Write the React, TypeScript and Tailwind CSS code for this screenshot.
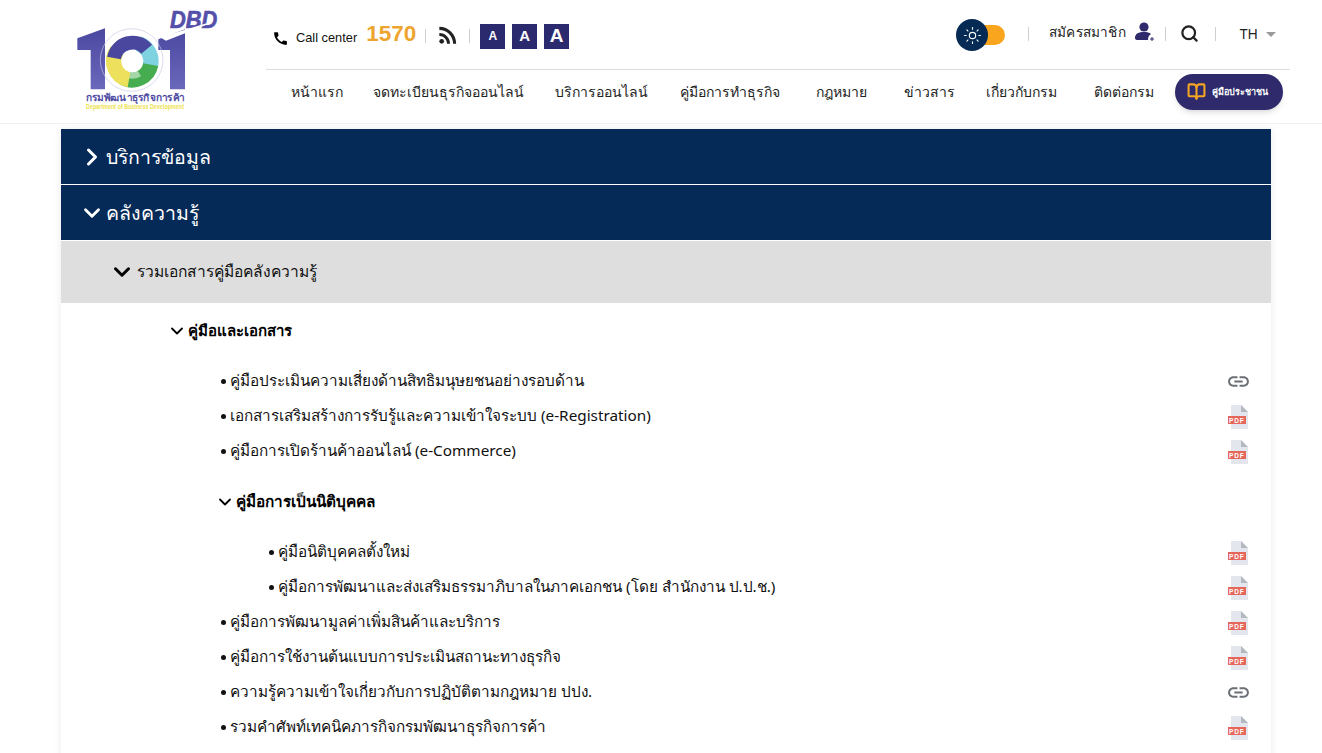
import { ChevronDown, ChevronRight, Search, Sun, BookOpen } from 'lucide-react';
import { MdCall, MdLink, MdRssFeed } from 'react-icons/md';

const font = { fontFamily: '"Noto Sans", "Open Sans", "DejaVu Sans", sans-serif' };
const latin = { fontFamily: '"Liberation Sans", sans-serif' };

const navItems = [
  { label: 'หน้าแรก', width: 'w-[82px]' },
  { label: 'จดทะเบียนธุรกิจออนไลน์', width: 'w-[182px]' },
  { label: 'บริการออนไลน์', width: 'w-[125px]' },
  { label: 'คู่มือการทำธุรกิจ', width: 'w-[136px]' },
  { label: 'กฎหมาย', width: 'w-[88px]' },
  { label: 'ข่าวสาร', width: 'w-[82px]' },
  { label: 'เกี่ยวกับกรม', width: 'w-[108px]' },
  { label: 'ติดต่อกรม', width: 'w-[81px]' },
];

function Logo() {
  return (
    <svg viewBox="45 24 435 336" className="w-[145px] h-[112px] shrink-0 overflow-visible">
      <defs>
        <linearGradient id="one" x1="0" y1="0" x2="0" y2="1">
          <stop offset="0" stopColor="#4b48a0" />
          <stop offset="1" stopColor="#6a68bb" />
        </linearGradient>
      </defs>
      <path d="M52 115 L135 85 V268 H92 V150 H52 Z" fill="url(#one)" />
      <path d="M295 118 L375 88 V268 H330 V150 H295 Z" fill="url(#one)" />
      <circle cx="215" cy="180" r="94" fill="none" stroke="#c7c8e6" strokeWidth="2" />
      {/* swirl bands */}
      <g fill="none">
        <path d="M236 131 A56 56 0 0 1 271 198" stroke="#7fd2e0" strokeWidth="46" />
        <path d="M272 194 A56 56 0 0 1 189 232" stroke="#45ad4f" strokeWidth="46" />
        <path d="M238 220 A42 42 0 0 1 196 220" stroke="#a5d6a8" strokeWidth="20" />
        <path d="M207 239 A56 56 0 0 1 171 152" stroke="#ece05c" strokeWidth="46" />
        <path d="M162 174 A56 56 0 0 1 260 148" stroke="#4a479e" strokeWidth="42" />
      </g>
      <circle cx="217" cy="186" r="31" fill="#fff" />
      <text x="330" y="84" fontSize="72" fontWeight="700" fontStyle="italic" fill="#5450aa" stroke="#5450aa" strokeWidth="2" style={latin} textLength="142" lengthAdjust="spacingAndGlyphs">DBD</text>
      <path d="M300 112 L440 70 L440 74 L318 122 Z" fill="#fff" />
      <text x="78" y="303" fontSize="29" fontWeight="700" fill="#4f4ca3" style={font} textLength="294" lengthAdjust="spacingAndGlyphs">กรมพัฒนาธุรกิจการค้า</text>
      <text x="78" y="326" fontSize="19" fontWeight="700" fill="#ede24e" style={latin} textLength="294" lengthAdjust="spacingAndGlyphs">Department of Business Development</text>
    </svg>
  );
}

function PdfIcon() {
  return (
    <svg viewBox="0 0 20 24" className="w-[20px] h-[24px]">
      <path d="M3 0 H13 L20 7 V24 H3 Z" fill="#e3e6ec" />
      <path d="M13 0 L20 7 H13 Z" fill="#b4b8bf" />
      <rect x="0" y="11" width="18" height="8" fill="#e5675c" />
      <text x="1" y="17.5" fontSize="6.5" fontWeight="700" letterSpacing="0.9" fill="#fff" style={latin}>PDF</text>
    </svg>
  );
}

function UserPlusIcon() {
  return (
    <svg viewBox="0 0 20 20" className="w-[20px] h-[20px]">
      <circle cx="9" cy="5" r="4.6" fill="#2e2a6b" />
      <path d="M0 16 C0 11.5 4 10 9 10 C12 10 14.5 10.6 16 12 C14 13 13 15 13 18 H3 C1 18 0 17.5 0 16 Z" fill="#2e2a6b" />
      <path d="M17 15 V19 M15 17 H19" stroke="#2e2a6b" strokeWidth="1" />
    </svg>
  );
}

function Separator({ className }: { className: string }) {
  return <span className={`w-px h-[14px] bg-[#cfcfcf] ${className}`} />;
}

function Row({ text, icon, indent = 'pl-[160px]' }: { text: string; icon: 'pdf' | 'link'; indent?: string }) {
  return (
    <div className={`flex items-center justify-between h-[35px] pr-[23px] ${indent}`}>
      <span className="flex items-center text-[15.3px] text-[#111]">
        <span className="w-[5px] h-[5px] rounded-full bg-[#111] mr-[4px] mt-[2px]" />
        {text}
      </span>
      <span className="w-[20px] flex justify-center pt-[2px]">
        {icon === 'pdf' ? <PdfIcon /> : <MdLink className="w-[25px] h-[25px] shrink-0 text-[#6b7076]" />}
      </span>
    </div>
  );
}

export default function App() {
  return (
    <div className="bg-white h-[753px] overflow-hidden" style={font}>
      <header className="h-[124px] border-b border-[#f1f1f1] flex pl-[75px] pr-[32px]">
        <div className="pt-[8px]"><Logo /></div>
        <div className="ml-[46px] flex-1 flex flex-col">
          <div className="h-[70px] border-b border-[#dcdcdc] flex items-center pl-[6px] pb-[1px]">
            <MdCall className="mt-[8px] w-[17px] h-[17px] text-black" />
            <span className="mt-[8px] ml-[7px] text-[12.8px] text-[#111]" style={latin}>Call center</span>
            <span className="ml-[9px] text-[22.5px] font-bold text-[#eda52f]" style={latin}>1570</span>
            <Separator className="mt-[4px] ml-[9px]" />
            <MdRssFeed className="mt-[2px] ml-[9px] w-[26px] h-[26px] text-[#222]" />
            <Separator className="mt-[4px] ml-[8px]" />
            <div className="mt-[4px] ml-[10px] flex gap-[7px]" style={latin}>
              <span className="w-[25px] h-[25px] bg-[#2b2a6e] text-white font-bold text-[12px] flex items-center justify-center">A</span>
              <span className="w-[25px] h-[25px] bg-[#2b2a6e] text-white font-bold text-[15px] flex items-center justify-center">A</span>
              <span className="w-[25px] h-[25px] bg-[#2b2a6e] text-white font-bold text-[19px] flex items-center justify-center">A</span>
            </div>
            <div className="ml-auto mr-[14px] flex items-center">
              <div className="relative mt-[2px] w-[49px] h-[32px] flex items-center">
                <span className="absolute right-0 w-[30px] h-[20px] rounded-full bg-[#f9a61e]" />
                <span className="absolute left-0 w-[32px] h-[32px] rounded-full bg-[#052a54] flex items-center justify-center">
                  <Sun className="w-[19px] h-[19px] text-white" strokeWidth={1.4} />
                </span>
              </div>
              <Separator className="ml-[23px]" />
              <span className="ml-[20px] mb-[4px] text-[13.6px] tracking-[0.2px] text-[#222]">สมัครสมาชิก</span>
              <span className="ml-[9px] mb-[4px] flex"><UserPlusIcon /></span>
              <Separator className="ml-[10px]" />
              <Search className="ml-[14px] mb-[2px] w-[19px] h-[19px] text-[#222]" strokeWidth={2.8} />
              <Separator className="ml-[16px]" />
              <span className="ml-[24px] mb-[2px] text-[14px] text-[#222]">TH</span>
              <span className="ml-[8px] w-0 h-0 border-x-[5px] border-x-transparent border-t-[5px] border-t-[#999]" />
            </div>
          </div>
          <nav className="flex-1 flex items-center justify-end pb-[10px]">
            <div className="flex items-center text-[14px] text-[#222]">
              {navItems.map((n) => <span key={n.label} className={n.width}>{n.label}</span>)}
            </div>
            <div className="mr-[7px] w-[108px] h-[36px] rounded-full bg-[#2e2a6b] shadow-md flex items-center pl-[12px] gap-[6px]">
              <BookOpen className="w-[19px] h-[19px] text-[#f5a623]" strokeWidth={2.6} />
              <span className="text-[9px] font-bold text-white">คู่มือประชาชน</span>
            </div>
          </nav>
        </div>
      </header>

      <main className="ml-[61px] w-[1210px] mt-[5px] shadow-[0_0_8px_rgba(0,0,0,0.08)]">
        <div className="h-[55px] bg-[#052a57] flex items-center pl-[17px] text-white text-[19.5px] font-medium">
          <ChevronRight className="w-[28px] h-[28px]" strokeWidth={2.6} />
          <span>บริการข้อมูล</span>
        </div>
        <div className="h-[55px] mt-px bg-[#052a57] flex items-center pl-[18px] text-white text-[19.5px] font-medium">
          <ChevronDown className="w-[26px] h-[26px]" strokeWidth={2.6} />
          <span className="ml-px">คลังความรู้</span>
        </div>
        <div className="h-[62px] mt-px bg-[#dedede] flex items-center pl-[48px] text-[15.6px] text-[#111]">
          <ChevronDown className="w-[26px] h-[26px] text-black" strokeWidth={2.8} />
          <span className="ml-[2px]">รวมเอกสารคู่มือคลังความรู้</span>
        </div>
        <section className="bg-white pt-[10px] h-[500px]">
          <div className="h-[35px] flex items-center pl-[106px] text-[15px] font-bold text-black">
            <ChevronDown className="w-[20px] h-[20px]" strokeWidth={2.2} />
            <span className="ml-px">คู่มือและเอกสาร</span>
          </div>
          <div className="mt-[15px]">
            <Row icon="link" text="คู่มือประเมินความเสี่ยงด้านสิทธิมนุษยชนอย่างรอบด้าน" />
            <Row icon="pdf" text="เอกสารเสริมสร้างการรับรู้และความเข้าใจระบบ (e-Registration)" />
            <Row icon="pdf" text="คู่มือการเปิดร้านค้าออนไลน์ (e-Commerce)" />
          </div>
          <div className="mt-[16px] h-[35px] flex items-center pl-[154px] text-[15.3px] font-bold text-black">
            <ChevronDown className="w-[20px] h-[20px]" strokeWidth={2.2} />
            <span className="ml-px">คู่มือการเป็นนิติบุคคล</span>
          </div>
          <div className="mt-[15px]">
            <Row indent="pl-[208px]" icon="pdf" text="คู่มือนิติบุคคลตั้งใหม่" />
            <Row indent="pl-[208px]" icon="pdf" text="คู่มือการพัฒนาและส่งเสริมธรรมาภิบาลในภาคเอกชน (โดย สำนักงาน ป.ป.ช.)" />
            <Row icon="pdf" text="คู่มือการพัฒนามูลค่าเพิ่มสินค้าและบริการ" />
            <Row icon="pdf" text="คู่มือการใช้งานต้นแบบการประเมินสถานะทางธุรกิจ" />
            <Row icon="link" text="ความรู้ความเข้าใจเกี่ยวกับการปฏิบัติตามกฎหมาย ปปง." />
            <Row icon="pdf" text="รวมคำศัพท์เทคนิคภารกิจกรมพัฒนาธุรกิจการค้า" />
          </div>
        </section>
      </main>
    </div>
  );
}
